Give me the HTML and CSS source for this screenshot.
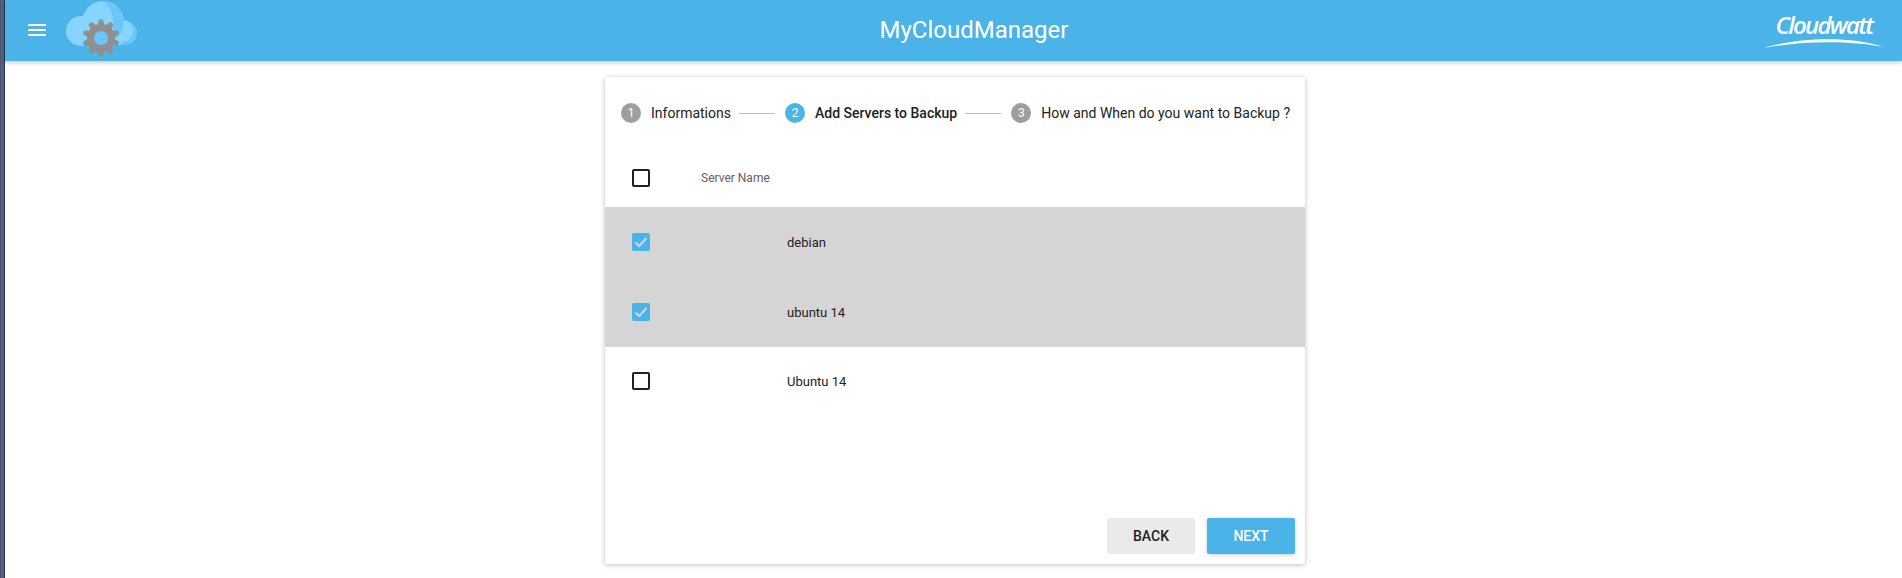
FILE: index.html

```html
<!DOCTYPE html>
<html lang="en">
<head>
    <meta charset="UTF-8">
    <title>MyCloudManager</title>
    <link rel="stylesheet" href="styles.css">
</head>
<body>
    <header class="topbar">
        <div class="topbar-left">
            <button class="menu-btn" aria-label="Menu">
                <svg width="24" height="24" viewBox="0 0 24 24"><path fill="#fff" d="M3 18h18v-2H3v2zm0-5h18v-2H3v2zm0-7v2h18V6H3z"/></svg>
            </button>
            <svg class="app-logo" width="72" height="59" viewBox="0 0 72 59">
                <circle cx="60" cy="33" r="12" fill="#6ac6fb"/>
                <circle cx="57" cy="31" r="11" fill="#86d5ff"/>
                <circle cx="16" cy="31" r="15" fill="#86d5ff"/>
                <circle cx="38" cy="22" r="21" fill="#86d5ff"/>
                <rect x="16" y="28" width="40" height="17" fill="#86d5ff"/>
                <path d="M39 1A21 21 0 0 1 50 39L42 45C52 30 50 12 39 1z" fill="#6ac6fb"/>
                <g fill="#8f8f8f">
                    <circle cx="36" cy="38" r="14"/>
                    <polygon points="32.500,26 34,19.500 38,19.500 39.500,26"/>
                    <polygon points="32.500,26 34,19.500 38,19.500 39.500,26" transform="rotate(36 36 38)"/>
                    <polygon points="32.500,26 34,19.500 38,19.500 39.500,26" transform="rotate(72 36 38)"/>
                    <polygon points="32.500,26 34,19.500 38,19.500 39.500,26" transform="rotate(108 36 38)"/>
                    <polygon points="32.500,26 34,19.500 38,19.500 39.500,26" transform="rotate(144 36 38)"/>
                    <polygon points="32.500,26 34,19.500 38,19.500 39.500,26" transform="rotate(180 36 38)"/>
                    <polygon points="32.500,26 34,19.500 38,19.500 39.500,26" transform="rotate(216 36 38)"/>
                    <polygon points="32.500,26 34,19.500 38,19.500 39.500,26" transform="rotate(252 36 38)"/>
                    <polygon points="32.500,26 34,19.500 38,19.500 39.500,26" transform="rotate(288 36 38)"/>
                    <polygon points="32.500,26 34,19.500 38,19.500 39.500,26" transform="rotate(324 36 38)"/>
                </g>
                <circle cx="36" cy="38" r="7" fill="#6ac6fb"/>
            </svg>
        </div>
        <h1 class="app-title">MyCloudManager</h1>
        <div class="brand">
            <span class="brand-name">Cloudwatt</span>
            <svg class="brand-swoosh" width="120" height="10" viewBox="0 0 120 10"><path fill="#fff" d="M0 10C30 0 85-3 120 9 85 2 35 3 0 10z"/></svg>
        </div>
    </header>

    <main class="page">
        <section class="card">
            <ol class="stepper">
                <li class="step">
                    <span class="step-num">1</span>
                    <span class="step-label">Informations</span>
                </li>
                <li class="step-line"></li>
                <li class="step active">
                    <span class="step-num">2</span>
                    <span class="step-label">Add Servers to Backup</span>
                </li>
                <li class="step-line"></li>
                <li class="step">
                    <span class="step-num">3</span>
                    <span class="step-label">How and When do you want to Backup ?</span>
                </li>
            </ol>

            <div class="table">
                <div class="row head">
                    <span class="box"></span>
                    <span class="col-title">Server Name</span>
                </div>
                <div class="row selected">
                    <span class="box checked"><svg width="18" height="18" viewBox="0 0 18 18"><path fill="none" stroke="#d5d5d5" stroke-width="2" d="M3.500 9.500l3.800 3.500 7.200-8"/></svg></span>
                    <span class="cell-name">debian</span>
                </div>
                <div class="row selected">
                    <span class="box checked"><svg width="18" height="18" viewBox="0 0 18 18"><path fill="none" stroke="#d5d5d5" stroke-width="2" d="M3.500 9.500l3.800 3.500 7.200-8"/></svg></span>
                    <span class="cell-name">ubuntu 14</span>
                </div>
                <div class="row last">
                    <span class="box"></span>
                    <span class="cell-name">Ubuntu 14</span>
                </div>
            </div>

            <div class="actions">
                <button class="btn">BACK</button>
                <button class="btn primary">NEXT</button>
            </div>
        </section>
    </main>
</body>
</html>
```

FILE: styles.css

```css
html, body { margin: 0; height: 100%; }
body {
    font-family: Roboto, sans-serif;
    background: #fff linear-gradient(to right, #555 1px, #3c62b4 1px, #3c62b4 4px, #333 4px) no-repeat;
    background-size: 5px 100%;
    color: #212121;
    padding-left: 5px;
    box-sizing: border-box;
    overflow: hidden;
}

.topbar {
    height: 61px;
    box-sizing: border-box;
    padding-bottom: 2px;
    background: #4ab3e8;
    display: grid;
    grid-template-columns: 1fr auto 1fr;
    align-items: center;
    box-shadow: 0 2px 4px rgba(0,0,0,.2);
    color: #fff;
}
.topbar-left { display: flex; align-items: center; padding-left: 20px; gap: 16px; }
.menu-btn { background: none; border: 0; padding: 0; width: 24px; height: 24px; }
.app-logo { display: block; }
.app-title { margin: 0 0 0 41px; font-size: 24px; font-weight: 400; }

.brand { justify-self: end; display: flex; flex-direction: column; align-items: center; padding-right: 18px; }
.brand-name { font-family: "Open Sans", sans-serif; font-size: 24px; font-style: italic; font-weight: 600; line-height: 26px; letter-spacing: -1.750px; }
.brand-swoosh { display: block; }

.page { display: flex; justify-content: center; padding-top: 16px; padding-left: 3px; }
.card {
    width: 700px;
    height: 487px;
    background: #fff;
    border-radius: 2px;
    box-shadow: 0 1px 5px rgba(0,0,0,.25);
    display: flex;
    flex-direction: column;
}

.stepper {
    list-style: none;
    margin: 0;
    padding: 0 15px 0 16px;
    height: 72px;
    display: flex;
    align-items: center;
    font-size: 14px;
}
.step { display: flex; align-items: center; gap: 10px; white-space: nowrap; }
.step-num {
    width: 20px;
    height: 20px;
    border-radius: 50%;
    background: #9e9e9e;
    color: #fff;
    font-size: 12px;
    display: flex;
    align-items: center;
    justify-content: center;
}
.step.active .step-num { background: #4ab3e8; }
.step.active .step-label { font-weight: 500; }
.step-line { flex: 1; height: 1px; background: #bdbdbd; margin: 0 10px 0 8px; }

.row { height: 70px; display: flex; align-items: center; padding-left: 27px; font-size: 13px; }
.row.head { height: 58px; }
.row.last { height: 68px; }
.row.selected { background: #d5d5d5; }
.box {
    width: 18px;
    height: 18px;
    box-sizing: border-box;
    border: 2px solid #212121;
    border-radius: 2px;
}
.box.checked { border: 0; background: #4ab3e8; }
.box svg { display: block; }
.col-title { margin-left: 51px; font-size: 12px; color: #616161; }
.cell-name { margin-left: 137px; }

.actions { margin-top: auto; display: flex; justify-content: flex-end; gap: 12px; padding: 0 10px 10px; }
.btn {
    width: 88px;
    height: 36px;
    border: 0;
    border-radius: 2px;
    background: #eaeaea;
    color: #212121;
    font: 500 14px Roboto, sans-serif;
}
.btn.primary { background: #4ab3e8; color: #fff; box-shadow: 0 1px 4px rgba(0,0,0,.2); }
```
